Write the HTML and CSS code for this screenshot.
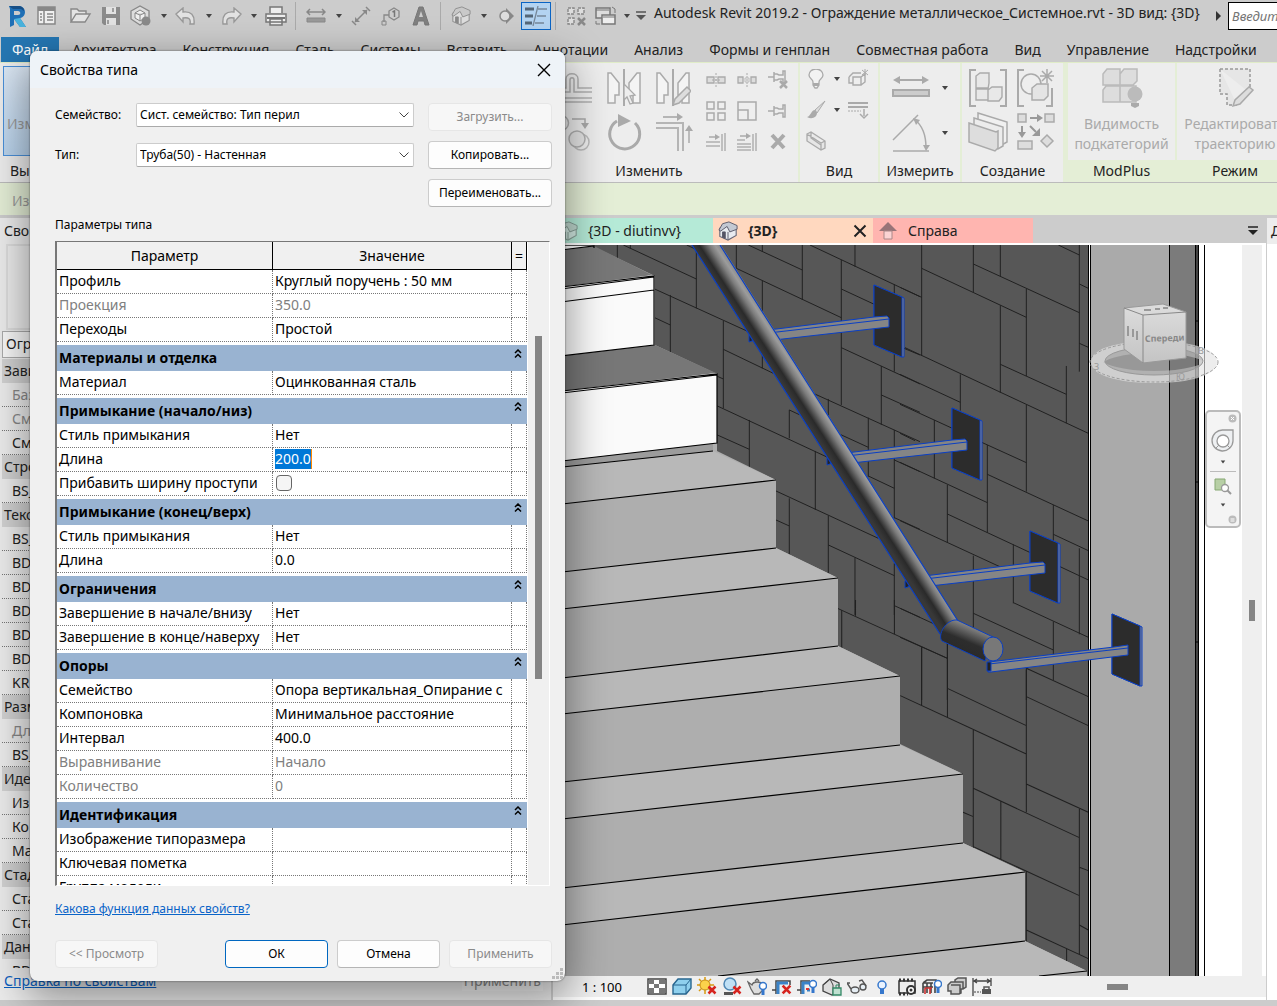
FILE: index.html
```html
<!doctype html>
<html lang="ru">
<head>
<meta charset="utf-8">
<title>Autodesk Revit 2019.2</title>
<link rel="stylesheet" href="styles.css">
</head>

<body>
<svg class="defs" aria-hidden="true">
	<symbol id="down" viewBox="0 0 8 8"><path d="M1 2h6L4 6z" fill="#444"/></symbol>
	<symbol id="up2" viewBox="0 0 8 10"><path d="M1 4l3-3 3 3M1 8.500l3-3 3 3" fill="none" stroke="#000" stroke-width="1.500"/></symbol>
	<symbol id="chev" viewBox="0 0 12 8"><path d="M1.500 1.500L6 6l4.500-4.500" fill="none" stroke="#444"/></symbol>
	<symbol id="house" viewBox="0 0 22 22"><path d="M2 8l9-5 9 4v9l-9 5-9-4z" fill="#e8ebf0" stroke="#667" stroke-width="1.200"/><path d="M5 3l7-2 9 4v4l-8 3-3-6-7 5-2-1z" fill="#c3c9d3" stroke="#556"/><path d="M5 12h3v7l-3-1zM11 12v8" stroke="#556" fill="#556"/></symbol>
	<symbol id="mirror" viewBox="0 0 36 40"><path d="M2 5h3l8 10v12H9v8H2zM34 5h-3l-8 10v12h4v8h7z" fill="#f4f4f4" stroke="#aaa" stroke-width="1.500"/><path d="M18 1v37" stroke="#aaa" stroke-width="2"/></symbol>
	<symbol id="pin" viewBox="0 0 20 20"><path d="M0 10h6M6 5v10M6 7h3l2 1h4V4h2v12h-2v-4h-4l-2 1H6" fill="none" stroke="#aaa" stroke-width="1.500"/></symbol>
	<symbol id="bulb" viewBox="0 0 20 20"><path d="M7 13c0-3-4-3-4-7a7 6 0 0114 0c0 4-4 4-4 7v3l-2 3H9l-2-3z" fill="#f2f2f2" stroke="#aaa" stroke-width="1.300"/><path d="M7 14h6v3H7z" fill="#aaa"/></symbol>
	<symbol id="cross" viewBox="0 0 10 10"><path d="M1.500 1.500l7 7M8.500 1.500l-7 7" stroke="#d6241f" stroke-width="2.500"/></symbol>
</svg>

<div class="app">
	<header class="quick">
		<button class="qi"><svg width="22" height="26" viewBox="0 0 22 26"><path d="M3 3h9c9 0 9 11 2 12l6 9h-6L8 16v6l-4 2V6z" fill="#1f6fb5"/><path d="M3 3h9c4 0 6 2 6 5l-3-2H7L3 3z" fill="#174f86"/><path d="M8 8h4c3 0 3 4 0 4H8z" fill="#ccc"/><path d="M8 16l6 8h6l-6-9z" fill="#49b2dc"/></svg></button>
		<button class="qi gap"><svg width="20" height="20" viewBox="0 0 20 20"><path d="M1 1h17v17H1z" fill="#f0f0f0" stroke="#888" stroke-width="1.500"/><path d="M1 1h17v4H1z" fill="#888"/><path d="M7 5v13M3 8h2M3 11h2M3 14h2M10 8h6M10 11h6M10 14h6" stroke="#888" stroke-width="1.500"/></svg></button>
		<button class="qi"><svg width="22" height="20" viewBox="0 0 22 20"><path d="M1 16V3h6l2 2h7v3M1 16l5-8h14l-5 8z" fill="#e4e4e4" stroke="#888" stroke-width="1.400"/></svg></button>
		<button class="qi"><svg width="20" height="20" viewBox="0 0 20 20"><path d="M1 1h18v18H3l-2-2z" fill="#8b8b8b"/><path d="M5 1h10v7H5zM5 12h10v7H5z" fill="#e2e2e2"/><path d="M7 14v4M12 2v4" stroke="#888" stroke-width="1.500"/></svg></button>
		<button class="qi"><svg width="22" height="22" viewBox="0 0 22 22"><path d="M1 6l9-5 9 5v8l-9 6-9-6z" fill="#ddd" stroke="#888" stroke-width="1.300"/><path d="M5 8l5-3 5 3v5l-5 3-5-3zM10 10v6M5 8l5 2 5-2" fill="#f0f0f0" stroke="#888"/><circle cx="16" cy="16" r="4.500" fill="#8a8a8a"/></svg></button>
		<button class="qa"><svg width="8" height="8"><use href="#down"/></svg></button>
		<button class="qi"><svg width="22" height="18" viewBox="0 0 22 18"><path d="M1 7l7-6v4c8-1 12 3 11 12h-4c1-5-1-7-7-6v4z" fill="#e2e2e2" stroke="#999" stroke-width="1.400"/></svg></button>
		<button class="qa"><svg width="8" height="8"><use href="#down"/></svg></button>
		<button class="qi"><svg width="22" height="18" viewBox="0 0 22 18"><path d="M21 7l-7-6v4C6 4 2 8 3 17h4c-1-5 1-7 7-6v4z" fill="#e2e2e2" stroke="#999" stroke-width="1.400"/></svg></button>
		<button class="qa"><svg width="8" height="8"><use href="#down"/></svg></button>
		<button class="qi"><svg width="22" height="20" viewBox="0 0 22 20"><path d="M5 7V1h12v6M1 8h20v8H1zM5 13h12v6H5z" fill="#eee" stroke="#777" stroke-width="1.500"/><path d="M2 12h18" stroke="#777" stroke-width="2"/></svg></button>
		<i class="qs"></i>
		<button class="qi"><svg width="20" height="16" viewBox="0 0 20 16"><path d="M1 4h18M4 1L1 4l3 3M16 1l3 3-3 3" fill="none" stroke="#888" stroke-width="1.500"/><path d="M1 10h18v4H1z" fill="#999" stroke="#888"/></svg></button>
		<button class="qa"><svg width="8" height="8"><use href="#down"/></svg></button>
		<button class="qi"><svg width="20" height="20" viewBox="0 0 20 20"><path d="M4 16L16 4M1 15l4 4M15 1l4 4" stroke="#888" stroke-width="1.500"/><path d="M4 16v-5l5 5zM16 4v5l-5-5z" fill="#888"/></svg></button>
		<button class="qi"><svg width="20" height="20" viewBox="0 0 20 20"><path d="M8 5l5-3 5 3v6l-5 3-5-3zM8 9H3v7" fill="none" stroke="#888" stroke-width="1.300"/><path d="M11.500 6l2-1v6" fill="none" stroke="#777" stroke-width="1.500"/><path d="M1 15h4v4H1z" fill="none" stroke="#888"/></svg></button>
		<button class="qi"><svg width="18" height="20" viewBox="0 0 18 20"><path d="M7 1h4l6 18h-4l-1-4H6l-1 4H1z" fill="#808080" stroke="#777"/><path d="M9 5l2 6H7z" fill="#ccc"/></svg></button>
		<i class="qs"></i>
		<button class="qi"><svg class="mute" width="20" height="20"><use href="#house"/></svg></button>
		<button class="qa"><svg width="8" height="8"><use href="#down"/></svg></button>
		<button class="qi"><svg width="18" height="18" viewBox="0 0 18 18"><path d="M9 1l8 8-8 8z" fill="#888"/><circle cx="8" cy="9" r="5" fill="#ddd" stroke="#888" stroke-width="1.500"/></svg></button>
		<button class="qi on"><svg width="22" height="20" viewBox="0 0 22 20"><path d="M0 3h9M0 10h8M0 17h7" stroke="#567" stroke-width="3"/><path d="M13 0L8 20M13 3h9M12 10h9M10 17h9" stroke="#789" stroke-width="1.300"/></svg></button>
		<i class="qs"></i>
		<button class="qi"><svg width="20" height="20" viewBox="0 0 20 20"><path d="M2 2h6v6H2zM12 2h6v6h-6zM2 12h6v6H2z" fill="#ddd" stroke="#888" stroke-dasharray="3 1" stroke-width="1.400"/><path d="M12 12l7 7M19 12l-7 7" stroke="#888" stroke-width="2.500"/></svg></button>
		<button class="qi"><svg width="22" height="20" viewBox="0 0 22 20"><path d="M1 2h14v10H1z" fill="#ddd" stroke="#777" stroke-width="1.500"/><path d="M7 9h13v9H7z" fill="#eee" stroke="#777" stroke-width="1.500"/><path d="M17 1l3 2v4M1 15v3h4M1 4h13M8 11h12" fill="none" stroke="#777"/></svg></button>
		<button class="qa narrow"><svg width="8" height="8"><use href="#down"/></svg></button>
		<button class="qa"><svg width="12" height="12" viewBox="0 0 12 12"><path d="M1 2h10" stroke="#555" stroke-width="1.500"/><path d="M1 5h10l-5 5z" fill="#555"/></svg></button>
		<span class="title">Autodesk Revit 2019.2 - Ограждение металлическое_Системное.rvt - 3D вид: {3D}</span>
		<svg class="more" width="6" height="10" viewBox="0 0 6 10"><path d="M0 0l5 5-5 5z" fill="#333"/></svg>
		<input class="search" type="text" aria-label="Поиск" placeholder="Введите">
	</header>

	<nav class="tabs">
		<button class="file">Файл</button>
		<button>Архитектура</button>
		<button>Конструкция</button>
		<button>Сталь</button>
		<button>Системы</button>
		<button>Вставить</button>
		<button>Аннотации</button>
		<button>Анализ</button>
		<button>Формы и генплан</button>
		<button>Совместная работа</button>
		<button>Вид</button>
		<button>Управление</button>
		<button>Надстройки</button>
	</nav>

	<section class="ribbon">
		<div class="panel p-select">
			<button class="modify">Изм</button>
			<span class="cap">Выб</span>
		</div>
		<div class="panel p-edit">
			<div class="tools">
				<div class="big">
					<svg width="36" height="40" viewBox="0 0 36 40"><path d="M0 20h9V11c0-7 12-7 12 0v9h14M0 24h13V12c0-3 4-3 4 0v12h18M0 34h35M0 30h35" fill="none" stroke="#b0b0b0" stroke-width="1.500"/></svg>
					<svg width="36" height="40" viewBox="0 0 36 40"><use href="#mirror"/><path d="M18 16l11 11-5 1 3 7-3 1-3-7-3 3z" fill="#eee" stroke="#aaa" stroke-width="1.300"/></svg>
					<svg width="36" height="40" viewBox="0 0 36 40"><use href="#mirror"/><path d="M18 37l2-6 12-12 4 4-12 12z" fill="#ddd" stroke="#aaa" stroke-width="1.500"/></svg>
					<svg width="36" height="40" viewBox="0 0 36 40"><circle cx="4" cy="10" r="7.500" fill="none" stroke="#b0b0b0" stroke-width="1.500"/><circle cx="24" cy="29" r="8" fill="#eee" stroke="#bbb" stroke-width="1.500"/><circle cx="20" cy="26" r="8" fill="#e6e6e6" stroke="#b0b0b0" stroke-width="1.500"/><path d="M15 6h13v5" fill="none" stroke="#aaa" stroke-width="1.500"/><path d="M24 10h8l-4 6z" fill="#aaa"/></svg>
					<svg width="36" height="40" viewBox="0 0 36 40"><path d="M11 8a15 15 0 1018 2" fill="none" stroke="#aaa" stroke-width="3"/><path d="M12 1l13 7-13 6z" fill="#aaa"/></svg>
					<svg width="40" height="40" viewBox="0 0 40 40"><path d="M1 10h27v28M1 15h22v23M8 4h16" fill="none" stroke="#b5b5b5" stroke-width="2"/><path d="M22 0l6 4-6 4zM30 18l4-6 4 6z" fill="#aaa"/><path d="M34 16v14" stroke="#aaa" stroke-width="1.500"/></svg>
				</div>
				<div class="small">
					<svg width="20" height="20" viewBox="0 0 20 20"><path d="M1 7h7v6H1zM12 7h7v6h-7z" fill="#ddd" stroke="#aaa" stroke-width="1.300"/><path d="M10 3v14M6 10h8" stroke="#aaa" stroke-dasharray="2 1"/></svg>
					<svg width="20" height="20" viewBox="0 0 20 20"><path d="M1 7h5v6H1zM14 7h5v6h-5z" fill="#ddd" stroke="#aaa" stroke-width="1.300"/><path d="M10 3v14" stroke="#aaa" stroke-dasharray="2 1"/><path d="M8 8h4v4H8z" fill="none" stroke="#bbb"/></svg>
					<svg width="20" height="20" viewBox="0 0 20 20"><use href="#pin" y="-3"/><path d="M12 11l7 7M19 11l-7 7" stroke="#aaa" stroke-width="2.500"/></svg>
					<svg width="20" height="20" viewBox="0 0 20 20"><path d="M1 1h7v7H1zM12 1h7v7h-7zM1 12h7v7H1zM12 12h7v7h-7z" fill="#eee" stroke="#aaa" stroke-width="1.500"/></svg>
					<svg width="20" height="20" viewBox="0 0 20 20"><path d="M1 1h18v18H1zM1 9h10v10" fill="#eee" stroke="#aaa" stroke-width="1.500"/></svg>
					<svg width="20" height="20"><use href="#pin"/></svg>
					<svg width="20" height="20" viewBox="0 0 20 20"><path d="M0 10h14M0 14h14M16 2v17M19 1v18" stroke="#b0b0b0" stroke-width="1.500"/><path d="M3 5h8" stroke="#aaa" stroke-width="1.500"/><path d="M9 2l5 3-5 3z" fill="#aaa"/></svg>
					<svg width="20" height="20" viewBox="0 0 20 20"><path d="M0 8h8M0 12h14M0 15h14M0 18h14M16 2v17M19 1v18" stroke="#b0b0b0" stroke-width="1.500"/><path d="M3 4h8" stroke="#aaa" stroke-width="1.500"/><path d="M9 1l5 3-5 3z" fill="#aaa"/></svg>
					<svg width="20" height="20" viewBox="0 0 20 20"><path d="M4 3l12 13M16 3L4 16" stroke="#aaa" stroke-width="4"/></svg>
				</div>
			</div>
			<span class="cap">Изменить</span>
		</div>
		<div class="panel p-view">
			<div class="tools view">
				<svg width="20" height="20"><use href="#bulb"/></svg><svg width="8" height="8"><use href="#down"/></svg>
				<svg width="22" height="20" viewBox="0 0 22 20"><path d="M1 8l4-4h8M1 8v6h4M5 8h8v8H5zM13 8l4-3v8l-4 3" fill="#eee" stroke="#aaa" stroke-width="1.400"/><path d="M17 0v6M14 1l6 5M20 1l-6 5" stroke="#aaa"/></svg>
				<svg width="20" height="20" viewBox="0 0 20 20"><path d="M19 1L9 10l2 3z" fill="#ddd" stroke="#aaa"/><path d="M9 10c-4 0-4 6-8 7 5 3 10 0 10-4z" fill="#aaa"/></svg><svg width="8" height="8"><use href="#down"/></svg>
				<svg width="22" height="20" viewBox="0 0 22 20"><path d="M0 3h20M0 7h20" stroke="#aaa" stroke-width="2"/><path d="M0 11h13" stroke="#aaa" stroke-dasharray="2 1"/><path d="M16 9v7M12 14l4 4 4-4" fill="none" stroke="#aaa" stroke-width="1.500"/></svg>
				<svg width="20" height="20" viewBox="0 0 20 20"><path d="M1 3l4-2 14 9v7l-4 2L1 10zM1 3l14 9 4-2M15 12v7M5 1v6l10 7" fill="#e6e6e6" stroke="#aaa" stroke-width="1.300"/></svg>
			</div>
			<span class="cap">Вид</span>
		</div>
		<div class="panel p-measure">
			<div class="tools measure">
				<svg width="38" height="36" viewBox="0 0 38 36"><path d="M3 10h32" stroke="#aaa" stroke-width="2"/><path d="M1 10l7-4v8zM37 10l-7-4v8z" fill="#aaa"/><path d="M1 20h36v6H1z" fill="#ccc" stroke="#aaa" stroke-width="2"/></svg><svg width="8" height="8"><use href="#down"/></svg>
				<svg width="38" height="38" viewBox="0 0 38 38"><path d="M1 26L26 1M1 37h36M23 6c8 6 11 15 11 28" fill="none" stroke="#aaa" stroke-width="1.500"/><path d="M21 4l7 2-4 5zM31 31h7l-4 6z" fill="#aaa"/></svg><svg width="8" height="8"><use href="#down"/></svg>
			</div>
			<span class="cap">Измерить</span>
		</div>
		<div class="panel p-create">
			<div class="tools create">
				<svg width="40" height="40" viewBox="0 0 40 40"><path d="M8 2H2v36h6M32 2h6v36h-6" fill="none" stroke="#aaa" stroke-width="2"/><path d="M8 8l4-3h9v10l-1 6h-12zM8 20h12v12H8zM20 22l4-3h10v10l-3 4H20z" fill="#e8e8e8" stroke="#aaa" stroke-width="1.400"/></svg>
				<svg width="40" height="40" viewBox="0 0 40 40"><path d="M8 2H2v36h6M36 20v18h-6" fill="none" stroke="#aaa" stroke-width="2"/><circle cx="15" cy="16" r="10" fill="#eee" stroke="#aaa" stroke-width="1.500"/><path d="M16 20l5-4h11v12l-4 4H16z" fill="#e4e4e4" stroke="#aaa" stroke-width="1.500"/><path d="M31 1v14M24 8h14M26 3l10 10M36 3L26 13" stroke="#aaa" stroke-width="1.500"/></svg>
				<svg width="40" height="40" viewBox="0 0 40 40"><path d="M10 1l29 9v20l-7 4V20L10 12z" fill="#f0f0f0" stroke="#aaa" stroke-width="1.500"/><path d="M6 6l29 9v19l-5 3-24-10z" fill="#ececec" stroke="#aaa" stroke-width="1.500"/><path d="M1 11l27 9 2-1v17l-3 3-26-9z" fill="#ddd" stroke="#aaa" stroke-width="1.500"/></svg>
				<svg width="40" height="40" viewBox="0 0 40 40"><path d="M2 2h8v8H2zM29 2h9v8h-9zM2 29h14v8H2zM25 29l6-6 6 6-6 6z" fill="#ddd" stroke="#aaa" stroke-width="1.500"/><path d="M14 6h8M6 14v8M14 14l6 6" stroke="#999" stroke-width="2"/><path d="M21 2l6 4-6 4zM2 20h8l-4 6zM24 16v8h-8z" fill="#999"/></svg>
			</div>
			<span class="cap">Создание</span>
		</div>
		<div class="panel p-mod">
			<div class="tools lone">
				<svg width="42" height="42" viewBox="0 0 42 42"><path d="M2 7l4-5h13v16H2zM19 7l4-5h13v12l-4 4H19zM2 23l3-4h14v16H2zM19 19h16v16H19z" fill="#ddd" stroke="#bbb" stroke-width="1.500"/><circle cx="34" cy="27" r="7.500" fill="#bbb"/><path d="M30 36h8v3l-4 2-4-2z" fill="#aaa"/></svg>
				<span class="lab">Видимость<br>подкатегорий</span>
			</div>
			<span class="cap">ModPlus</span>
		</div>
		<div class="panel p-mode">
			<div class="tools lone">
				<svg width="42" height="42" viewBox="0 0 42 42"><path d="M6 2h30v24M6 2v25h7v11h10" fill="#e6e6e6" stroke="#999" stroke-width="1.500" stroke-dasharray="3 2"/><path d="M19 39l2-6 14-13 4 3-13 14z" fill="#ddd" stroke="#aaa" stroke-width="1.500"/></svg>
				<span class="lab">Редактировать<br>траекторию</span>
			</div>
			<span class="cap">Режим</span>
		</div>
	</section>

	<div class="options">Изм</div>

	<main class="work">
		<aside class="props">
			<h2>Свой</h2>
			<div class="preview"></div>
			<div class="filter">Огр</div>
			<ul class="plist">
				<li class="g">Зави</li>
				<li class="dim">Баз</li>
				<li class="dim">См</li>
				<li>См</li>
				<li class="g">Стро</li>
				<li>BS_</li>
				<li class="g">Текс</li>
				<li>BS_</li>
				<li>BD</li>
				<li>BD</li>
				<li>BD</li>
				<li>BD</li>
				<li>BD</li>
				<li>KR</li>
				<li class="g">Разм</li>
				<li class="dim">Дл</li>
				<li>BS_</li>
				<li class="g">Иде</li>
				<li>Из</li>
				<li>Ко</li>
				<li>Ма</li>
				<li class="g">Стад</li>
				<li>Ста</li>
				<li>Ста</li>
				<li class="g">Дан</li>
				<li>BD</li>
			</ul>
			<div class="pfoot"><a href="#">Справка по свойствам</a><button disabled>Применить</button></div>
		</aside>

		<section class="view3d">
			<div class="vtabs">
				<button class="vt mint"><svg class="mute" width="20" height="20"><use href="#house"/></svg>{3D - diutinvv}</button>
				<button class="vt peach"><svg width="20" height="20"><use href="#house"/></svg><b>{3D}</b><svg class="vx" width="14" height="14" viewBox="0 0 14 14"><path d="M1.500 1.500l11 11M12.500 1.500l-11 11" stroke="#222" stroke-width="2"/></svg></button>
				<button class="vt rose"><svg width="20" height="20" viewBox="0 0 20 20"><path d="M1 10l9-9 9 9z" fill="#987478"/><path d="M6 10h8v8H6z" fill="#fbd3d3" stroke="#a88"/></svg>Справа</button>
				<svg class="vmenu" width="12" height="12" viewBox="0 0 12 12"><path d="M1 2h10" stroke="#222" stroke-width="1.500"/><path d="M1 5h10l-5 5z" fill="#222"/></svg>
			</div>
			<div class="stage">
				<svg class="scene" viewBox="553 245 689 731" preserveAspectRatio="xMinYMin slice">
					<defs>
						<linearGradient id="tube" gradientUnits="userSpaceOnUse" x1="692" y1="245" x2="712" y2="232"><stop offset="0" stop-color="#383838"/><stop offset=".25" stop-color="#2a2a2a"/><stop offset=".6" stop-color="#7c7c7c"/><stop offset=".8" stop-color="#9c9c9c"/><stop offset="1" stop-color="#8a8a8a"/></linearGradient>
						<linearGradient id="tube2" gradientUnits="userSpaceOnUse" x1="960" y1="650" x2="970" y2="626"><stop offset="0" stop-color="#2a2a2a"/><stop offset=".4" stop-color="#2d2d2d"/><stop offset="1" stop-color="#858585"/></linearGradient>
						<linearGradient id="face" x1="0" y1="0" x2="0" y2="1"><stop offset="0" stop-color="#ddd"/><stop offset="1" stop-color="#c4c4c4"/></linearGradient>
						<g id="plate">
							<path d="M874 285l28 12 2 1v59h-2l-28-12z" fill="#858585" stroke="#0a3fc4"/>
							<path d="M874 285l28 12v60l-28-12z" fill="#2c2c2c" stroke="#0a3fc4"/>
						</g>
						<g id="arm">
							<path d="M749 335v7l8-3v-6z" fill="#222" stroke="#0a3fc4"/>
							<path d="M760 331l114-14 13-1 2 2v9l-115 13z" fill="#858585" stroke="#0a3fc4"/>
							<path d="M760 334l129-15" stroke="#0a3fc4"/>
						</g>
					</defs>
					<path d="M553 245h536v731H553z" fill="#575757"/>
					<!-- brick joints -->
					<g fill="none" stroke="#202020" stroke-width="3">
						<path transform="translate(560 215) scale(.3333)" d="M172 90v40M211 90v10M409 108v172M331 240v172M490 318v262M529 90v70M607 90v20M607 198v262M727 90v165M885 90v65M844 135v435M1003 208v262M964 453v177M688 585v85M568 615v145M805 552v90M766 708v177M925 608v177M1003 645v265M688 850v172M805 902v183M885 1028v172M1003 1045v155M190 90l219 102M284 222l281 128M284 308l47 22M490 403l150 72M472 484l18 8M380 90l30 14M565 90l162 75M529 160l315 148M750 90l330 155M844 222l99 46M844 398l236 109M964 540l116 52M1020 395l60 25M760 535l320 145M472 573l348 162M472 660l96 43M688 585l30 14M840 658l85 39M925 783l78 37M1003 735l77 35M1003 908l77 35M648 828l307 142M648 915l40 18M805 990l198 92M1003 1172l77 35"/>
						<path transform="translate(900 240) scale(.3333)" d="M65 15v332M220 15v142M301 15v93M301 196v262M379 147v261M538 15v380M181 403v109M499 378v172M379 495v260M103 540v175M262 615v263M142 735v173M460 795v110M340 913v177M220 947v218M538 925v258M460 1145v175M65 1222v158M142 1210v170M379 1290v90M0 142l65 30M65 85l314 147M220 72l318 146M475 15l63 30M538 132l27 13M538 310l27 12M15 323l550 257M301 373l198 90M0 403l181 84M0 493l157 72M0 580l45 22M245 607l134 61M262 703l303 140M0 667l262 121M142 822l249 116M0 842l310 143M460 883l105 49M480 980l85 40M340 1088l225 104M220 1120l240 110M0 1105l120 55M0 1192l142 63"/>
						<path transform="translate(560 600) scale(.3444 .3333)" d="M818 30v115M858 0v47M971 0v103M1050 142v175M1125 125v227M1200 390v355M1280 603v174M1354 205v432M1508 627v436M1471 1045v40M1354 815v210M806 25l319 150M988 287l366 175M1125 265l229 112M1354 205l180 85M1354 290l180 87M1354 552l180 85M1200 565l308 148M1170 637l30 13M1200 740l308 147M1354 990l180 86M1508 802l26 10M1508 975l26 15"/>
					</g>
					<!-- stair -->
					<path d="M553 246h41v1l61 29v69l62 29v77l59 29v68l62 30v68l62 30v68l63 30v69l62 29v69l62 30v5H553z" fill="#aeaeae"/>
					<path d="M553 252l41-6 58 29-99 13zM553 357l102-12 61 28-163 19z" fill="#777"/>
					<path d="M553 288l101-13v70l-101 12zM553 392l164-19v70l-164 19zM553 246h41l-41 5z" fill="#fafafa"/>
					<path d="M553 462l160-18v7l-160 17z" fill="#9c9c9c"/>
					<path d="M553 468l160-17 63 29-223 25zM553 573l223-25 62 30-285 32zM553 679l285-33 62 30-347 39zM553 783l347-38 63 29-410 46zM553 889l410-46 62 29-472 54zM700 976l325-35 62 30-48 5z" fill="#b8b8b8"/>
					<path d="M553 251l41-5v2M553 288l101-12v69l-102 12M553 290l101-13M553 303l101-13M553 392l164-18v69l-164 19M553 394l164-19M553 468l160-17M553 505l223-25M553 573l223-25M553 610l285-32M553 679l285-33M553 715l347-39M553 783l347-38M553 820l410-46M553 889l410-46M553 926l472-54M718 976l307-35M1039 976l48-5" fill="none" stroke="#000" stroke-width="1.200"/>
					<!-- column at the right -->
					<path d="M1089 245h116v731h-116z" fill="#fff"/>
					<path d="M1091 245h78v731h-78z" fill="#aaa"/>
					<path d="M1169 245h27v731h-27z" fill="#7b7b7b"/>
					<path d="M1196 245h3v731h-3z" fill="#444"/>
					<path d="M1205 245h37v731h-37z" fill="#fff"/>
					<path d="M1088.500 245v731M1090.500 245v731M1169.500 245v731M1195.500 245v731M1198.500 245v731M1204.500 245v731M1196 321h3M1196 482h3M1196 642h3" stroke="#000"/>
					<!-- supports and handrail -->
					<use href="#plate"/><use href="#arm"/>
					<use href="#plate" x="78" y="123"/><use href="#arm" x="78" y="123"/>
					<use href="#plate" x="156" y="246"/><use href="#arm" x="156" y="246"/>
					<use href="#plate" x="238" y="329"/>
					<path d="M989 662l125-15 14-2v10l-137 17h-3z" fill="#858585" stroke="#0a3fc4"/>
					<path d="M989 664l139-16" stroke="#0a3fc4"/>
					<path d="M987 662h4v9h-4z" fill="#222" stroke="#0a3fc4"/>
					<path d="M692 245h29l237 376-16 14-2-1z" fill="url(#tube)"/>
					<path d="M692 245l248 389M720 245l238 376" stroke="#0a3fc4" stroke-width="1.200"/>
					<path d="M957 620l36 17-8 24-43-20c-5-6 4-22 15-21z" fill="url(#tube2)" stroke="#0a3fc4"/>
					<ellipse cx="993" cy="649" rx="10" ry="12" fill="#787878" stroke="#0a3fc4"/>
					<!-- view cube -->
					<ellipse cx="1154" cy="362" rx="57" ry="15" fill="none" stroke="#e4e4e4" stroke-opacity=".65" stroke-width="12"/>
					<ellipse cx="1154" cy="362" rx="64" ry="20" fill="none" stroke="#999" stroke-dasharray="3 2"/>
					<ellipse cx="1154" cy="361" rx="49" ry="14" fill="#777" fill-opacity=".35" stroke="#999"/>
					<path d="M1124 308l39-4 23 8v46l-43 5-19-14z" fill="url(#face)" stroke="#999"/>
					<path d="M1124 308l19 7 43-3M1143 315v48" fill="none" stroke="#888"/>
					<path d="M1144 310h7M1155 309h5M1163 308h5M1128 326v10M1133 329v8M1137 331v9" stroke="#999" stroke-width="2"/>
					<text x="1145" y="342" class="cube" transform="rotate(-2 1144 343)">Спереди</text>
					<text x="1094" y="370" class="compass">З</text><text x="1176" y="380" class="compass">Ю</text><text x="1198" y="354" class="compass">В</text>
				</svg>
				<div class="navbar">
					<button class="mini" aria-label="Закрыть"><svg width="9" height="9" viewBox="0 0 9 9"><circle cx="4.500" cy="4.500" r="4" fill="#bbb"/><path d="M3 3l3 3M6 3L3 6" stroke="#fff"/></svg></button>
					<button aria-label="Штурвал"><svg width="24" height="24" viewBox="0 0 24 24"><path d="M12 1h10v11a10.500 10.500 0 11-10-11z" fill="#eef0f2" stroke="#999" stroke-width="1.300"/><circle cx="12" cy="12" r="6" fill="#fff" stroke="#999" stroke-width="1.300"/><path d="M5 19l3-3M19 19l-3-3" stroke="#999"/></svg></button>
					<svg width="6" height="6"><use href="#down"/></svg>
					<hr>
					<button aria-label="Зум"><svg width="18" height="18" viewBox="0 0 18 18"><path d="M1 1h10v11H1z" fill="#b7cfa5" stroke="#86a872"/><circle cx="11" cy="10" r="3.500" fill="#fff" stroke="#999" stroke-width="1.300"/><path d="M13 12l4 4" stroke="#999" stroke-width="2"/></svg></button>
					<svg width="6" height="6"><use href="#down"/></svg>
					<button class="mini end" aria-label="Настройка"><svg width="9" height="9" viewBox="0 0 9 9"><circle cx="4.500" cy="4.500" r="4" fill="#bbb"/><path d="M2.500 4h4M2.500 6h4" stroke="#fff"/></svg></button>
				</div>
				<div class="vscroll"><i></i></div>
			</div>
			<div class="vbar">
				<span class="scale">1 : 100</span>
				<div class="vicons">
					<svg viewBox="0 0 20 20"><path d="M1 2h18v15H1z" fill="#fff" stroke="#444" stroke-width="1.500"/><path d="M2 3h5v4H2zM12 3h6v4h-6zM7 7h5v4H7zM2 11h5v5H2zM12 11h6v5h-6z" fill="#777"/></svg>
					<svg viewBox="0 0 20 20"><path d="M1 8l5-6h13v9l-5 6H1z" fill="#8fd0ee" stroke="#27658f" stroke-width="1.400"/><path d="M1 8h13l5-6M14 8v9" fill="none" stroke="#27658f"/></svg>
					<svg viewBox="0 0 20 20"><path d="M8 0v17M0 8h17M2 2l12 12M14 2L2 14" stroke="#d99a12" stroke-width="1.500"/><circle cx="8" cy="8" r="5" fill="#fbd24b" stroke="#c98d12"/><use href="#cross" x="10" y="8" width="10" height="10"/></svg>
					<svg viewBox="0 0 20 20"><circle cx="8" cy="7" r="6" fill="#bfe0f5" stroke="#4d87b5" stroke-width="1.500"/><path d="M2 15h9v3H2z" fill="#555"/><use href="#cross" x="10" y="8" width="10" height="10"/></svg>
					<svg viewBox="0 0 20 20"><path d="M1 5l4 3c1-4 9-4 11 0v5l-4 4H7L4 12zM8 4l2-2 2 2" fill="#ddd" stroke="#666" stroke-width="1.300"/><circle cx="16" cy="9" r="3.500" fill="#fff" stroke="#3577cc" stroke-width="1.500"/><path d="M16 13v5" stroke="#3577cc" stroke-width="3"/></svg>
					<svg viewBox="0 0 20 20"><path d="M0 13h4M4 17V4h14v4" fill="none" stroke="#444" stroke-width="1.500"/><path d="M6 17V6h10" fill="none" stroke="#3a83c8" stroke-width="3"/><use href="#cross" x="9" y="7" width="11" height="11"/></svg>
					<svg viewBox="0 0 20 20"><path d="M0 13h4M4 17V4h9" fill="none" stroke="#444" stroke-width="1.500"/><path d="M6 17V6h8M10 13h3" fill="none" stroke="#3a83c8" stroke-width="3"/><path d="M9 12h3" stroke="#d33" stroke-width="2"/><circle cx="16" cy="7" r="3.500" fill="#fff" stroke="#3577cc" stroke-width="1.500"/><path d="M16 11v5" stroke="#3577cc" stroke-width="3"/></svg>
					<svg viewBox="0 0 20 20"><path d="M1 8l7-6 9 4v9l-7 3-9-4z" fill="#ddd" stroke="#444" stroke-width="1.300"/><path d="M1 8l7-6 3 6v10" fill="none" stroke="#444"/><path d="M11 11h8v7h-8z" fill="#bfe0d0" stroke="#386" stroke-width="1.300"/><path d="M14 11V8h4" fill="none" stroke="#386"/></svg>
					<svg viewBox="0 0 20 20"><ellipse cx="8" cy="13" rx="4" ry="3" fill="#e6eef4" stroke="#555" stroke-width="1.400"/><ellipse cx="16" cy="10" rx="3" ry="3" fill="#e6eef4" stroke="#555" stroke-width="1.400"/><path d="M4 12L0 6h3M19 9l-4-6-3 1" fill="none" stroke="#555" stroke-width="1.400"/></svg>
					<svg viewBox="0 0 20 20"><circle cx="10" cy="8" r="4" fill="#eaf3ff" stroke="#3577cc" stroke-width="1.500"/><path d="M10 12v5" stroke="#3577cc" stroke-width="4"/></svg>
					<svg viewBox="0 0 20 20"><path d="M2 4h16v12H2z" fill="#eee" stroke="#333" stroke-width="1.500"/><path d="M2 3h16M2 17h9" stroke="#333" stroke-width="3" stroke-dasharray="2 2"/><circle cx="14" cy="13" r="4" fill="#fff" stroke="#333" stroke-width="2"/><circle cx="14" cy="13" r="1.500" fill="#333"/></svg>
					<svg viewBox="0 0 20 20"><path d="M1 6l4-3h9v5M1 6v10M1 6h10M1 10h10M5 6v10M9 6v10M13 8v8" fill="none" stroke="#444" stroke-width="1.600"/><path d="M3 11h7M3 11v6M8 11v6" stroke="#c33" stroke-width="1.600"/><circle cx="16" cy="7" r="3.500" fill="#fff" stroke="#3577cc" stroke-width="1.500"/><path d="M16 11v5" stroke="#3577cc" stroke-width="3"/></svg>
					<svg viewBox="0 0 20 20"><path d="M1 8l3-3h4V3l3-2h8v9l-3 2h-2v4l-2 1H4v-3H1zM4 8h9v9M8 5h8v7" fill="#ccc" stroke="#555" stroke-width="1.500"/></svg>
					<svg viewBox="0 0 20 20"><path d="M1 1v18M19 1v8M2 4h16M5 2L2 4l3 2M15 2l3 2-3 2" fill="none" stroke="#444" stroke-width="1.300"/><path d="M2 15h7" stroke="#444" stroke-dasharray="2 1"/><path d="M10 12h9v5h-9z" fill="#555"/><path d="M12 12v-2h5v2" fill="none" stroke="#555" stroke-width="1.500"/></svg>
				</div>
				<i class="hthumb"></i>
			</div>
		</section>

		<aside class="browser"><h2>Д</h2></aside>
	</main>
	<footer class="status"></footer>
</div>

<form class="dlg" role="dialog" aria-labelledby="dt">
	<header class="dhead">
		<h1 id="dt">Свойства типа</h1>
		<button type="button" class="dclose" aria-label="Закрыть"><svg width="14" height="14" viewBox="0 0 14 14"><path d="M1 1l12 12M13 1L1 13" stroke="#000" stroke-width="1.400"/></svg></button>
	</header>
	<div class="dbody">
		<div class="dtop">
			<div class="fields">
				<label for="fam">Семейство:</label>
				<span class="sel"><select id="fam"><option>Сист. семейство: Тип перил</option></select><svg width="12" height="8"><use href="#chev"/></svg></span>
				<label for="typ">Тип:</label>
				<span class="sel"><select id="typ"><option>Труба(50) - Настенная</option></select><svg width="12" height="8"><use href="#chev"/></svg></span>
			</div>
			<div class="side">
				<button type="button" class="btn" disabled>Загрузить...</button>
				<button type="button" class="btn">Копировать...</button>
				<button type="button" class="btn">Переименовать...</button>
			</div>
		</div>
		<p class="ptitle">Параметры типа</p>
		<div class="grid">
			<div class="gwrap">
				<table>
					<colgroup><col class="c1"><col class="c2"><col class="c3"></colgroup>
					<thead><tr><th>Параметр</th><th>Значение</th><th>=</th></tr></thead>
					<tbody>
						<tr><td>Профиль</td><td>Круглый поручень : 50 мм</td><td></td></tr>
						<tr class="dim"><td>Проекция</td><td>350.0</td><td></td></tr>
						<tr><td>Переходы</td><td>Простой</td><td></td></tr>
					</tbody>
					<tbody>
						<tr class="grp"><th colspan="3">Материалы и отделка<svg width="8" height="10"><use href="#up2"/></svg></th></tr>
						<tr><td>Материал</td><td>Оцинкованная сталь</td><td></td></tr>
					</tbody>
					<tbody>
						<tr class="grp"><th colspan="3">Примыкание (начало/низ)<svg width="8" height="10"><use href="#up2"/></svg></th></tr>
						<tr><td>Стиль примыкания</td><td>Нет</td><td></td></tr>
						<tr><td><label for="len">Длина</label></td><td><input id="len" class="edit" type="text" value="200.0"></td><td></td></tr>
						<tr><td><label for="add">Прибавить ширину проступи</label></td><td><input id="add" class="check" type="checkbox"></td><td></td></tr>
					</tbody>
					<tbody>
						<tr class="grp"><th colspan="3">Примыкание (конец/верх)<svg width="8" height="10"><use href="#up2"/></svg></th></tr>
						<tr><td>Стиль примыкания</td><td>Нет</td><td></td></tr>
						<tr><td>Длина</td><td>0.0</td><td></td></tr>
					</tbody>
					<tbody>
						<tr class="grp"><th colspan="3">Ограничения<svg width="8" height="10"><use href="#up2"/></svg></th></tr>
						<tr><td>Завершение в начале/внизу</td><td>Нет</td><td></td></tr>
						<tr><td>Завершение в конце/наверху</td><td>Нет</td><td></td></tr>
					</tbody>
					<tbody>
						<tr class="grp"><th colspan="3">Опоры<svg width="8" height="10"><use href="#up2"/></svg></th></tr>
						<tr><td>Семейство</td><td>Опора вертикальная_Опирание с</td><td></td></tr>
						<tr><td>Компоновка</td><td>Минимальное расстояние</td><td></td></tr>
						<tr><td>Интервал</td><td>400.0</td><td></td></tr>
						<tr class="dim"><td>Выравнивание</td><td>Начало</td><td></td></tr>
						<tr class="dim"><td>Количество</td><td>0</td><td></td></tr>
					</tbody>
					<tbody>
						<tr class="grp"><th colspan="3">Идентификация<svg width="8" height="10"><use href="#up2"/></svg></th></tr>
						<tr><td>Изображение типоразмера</td><td></td><td></td></tr>
						<tr><td>Ключевая пометка</td><td></td><td></td></tr>
						<tr><td>Группа модели</td><td></td><td></td></tr>
					</tbody>
				</table>
			</div>
			<div class="gscroll"><i></i></div>
		</div>
		<a class="help" href="#">Какова функция данных свойств?</a>
		<div class="dfoot">
			<button type="button" class="btn" disabled>&lt;&lt; Просмотр</button>
			<button type="submit" class="btn ok">ОК</button>
			<button type="button" class="btn">Отмена</button>
			<button type="button" class="btn" disabled>Применить</button>
		</div>
	</div>
	<svg class="grip" width="12" height="12" viewBox="0 0 12 12"><path d="M8 0h3v3H8zM4 4h3v3H4zM8 4h3v3H8zM0 8h3v3H0zM4 8h3v3H4zM8 8h3v3H8z" fill="#bbb"/></svg>
</form>
</body>

</html>
```
FILE: styles.css
```css
*{
	box-sizing: border-box;
}
body{
	margin: 0;
	overflow: hidden;
	font: 14px/20px "Noto Sans", "Open Sans", sans-serif;
	color: #222;
}
button{
	font: inherit;
	color: inherit;
	border: none;
	background: none;
	padding: 0;
}
h1,h2,p,ul{
	margin: 0;
	padding: 0;
	font-weight: normal;
	list-style: none;
}
svg{
	display: block;
	flex: none;
}
.defs{
	position: absolute;
	width: 0;
	height: 0;
}
.app{
	height: 100vh;
	display: flex;
	flex-direction: column;
	background: #ccc;
}

/* quick access */
.quick{
	display: flex;
	align-items: center;
	height: 32px;
	padding-left: 2px;
	flex: none;
}
.qi{
	display: flex;
	align-items: center;
	justify-content: center;
	flex: none;
	width: 30px;
	height: 28px;
}
.qi.gap{
	margin-right: 4px;
}
.qi.on{
	background: #b3d3f1;
	border: 1px solid #0a64c4;
}
.qa{
	display: flex;
	justify-content: center;
	flex: none;
	width: 15px;
}
.qa.narrow{
	width: 12px;
}
.qs{
	flex: none;
	height: 28px;
	width: 1px;
	margin: 0 5px 0 4px;
	background: #aaa;
}
.mute{
	filter: grayscale(1);
	opacity: .55;
}
.title{
	flex: none;
	padding: 0 8px 6px 6px;
	white-space: nowrap;
}
.more{
	margin: 0 6px 0 auto;
}
.search{
	flex: none;
	width: 49px;
	height: 28px;
	border: 1px solid #000;
	border-right: none;
	background: #fff;
	padding: 0 0 0 3px;
	font: italic 13px/20px "Noto Sans", sans-serif;
}

/* ribbon tabs */
.tabs{
	display: flex;
	flex: none;
	height: 30px;
	padding: 5px 0 0 1px;
	white-space: nowrap;
}
.tabs button{
	padding: 0 13px;
	flex: none;
}
.tabs .file{
	padding: 0 11px;
	background: #2577b3;
	color: #fff;
}

/* ribbon */
.ribbon{
	display: flex;
	flex: none;
	height: 121px;
	background: #ededed;
	border-top: 1px solid #e0ecc8;
	border-bottom: 1px solid #bbb;
}
.panel{
	display: flex;
	flex-direction: column;
	flex: none;
	border-right: 2px solid #e4eed6;
}
.cap{
	text-align: center;
	line-height: 22px;
}
.p-select{
	width: 500px;
	padding: 3px 0 0 3px;
}
.p-select .cap{
	text-align: left;
	padding-left: 7px;
}
.modify{
	width: 50px;
	height: 90px;
	padding: 26px 0 0 3px;
	margin-bottom: 4px;
	text-align: left;
	border: 1px solid #4a90d9;
	background: linear-gradient(#dbe7f4, #b9d3ec);
	color: #999;
}
.tools{
	display: flex;
	height: 97px;
}
.p-edit{
	width: 300px;
}
.p-edit .tools{
	justify-content: flex-end;
	padding: 5px 10px 0 0;
}
.big{
	display: grid;
	grid-template-columns: repeat(3, 36px);
	grid-auto-rows: 40px;
	gap: 5px 13px;
	margin-right: 15px;
}
.small{
	display: grid;
	grid-template-columns: repeat(3, 20px);
	grid-auto-rows: 20px;
	gap: 11px;
	padding-top: 2px;
}
.p-view{
	width: 80px;
}
.tools.view{
	display: grid;
	grid-template-columns: 20px 8px 22px;
	grid-auto-rows: 20px;
	gap: 11px 7px;
	align-items: center;
	padding: 6px 0 0 6px;
}
.p-measure{
	width: 82px;
}
.tools.measure{
	display: grid;
	grid-template-columns: 38px 8px;
	grid-auto-rows: 38px;
	gap: 7px 11px;
	align-items: center;
	padding: 6px 0 0 12px;
}
.p-create{
	width: 103px;
}
.tools.create{
	display: grid;
	grid-template-columns: 40px 40px;
	grid-auto-rows: 40px;
	gap: 4px 8px;
	padding: 5px 0 0 6px;
}
.p-mod{
	width: 112px;
	border-left: 3px solid #e4eed6;
}
.p-mode{
	width: 116px;
	border-right: none;
}
.lone{
	flex-direction: column;
	align-items: center;
	padding-top: 4px;
	gap: 5px;
	color: #aaa;
}
.lab{
	text-align: center;
	white-space: nowrap;
}
.p-mod .cap,
.p-mode .cap{
	background: #e4eed6;
}
.options{
	flex: none;
	height: 35px;
	padding: 8px 12px;
	background: #e4eed6;
	border-bottom: 3px solid #ccc;
	color: #999;
}

/* workspace */
.work{
	flex: 1;
	min-height: 0;
	display: flex;
}
.props{
	width: 553px;
	flex: none;
	display: flex;
	flex-direction: column;
	padding-left: 2px;
	background: #ececec;
	border-right: 2px solid #ccc;
}
.props h2,
.browser h2{
	flex: none;
	padding-left: 2px;
	font-size: 14px;
	line-height: 26px;
}
.preview{
	flex: none;
	height: 86px;
	margin: 0 4px;
	border: 2px solid #ddd;
}
.filter{
	flex: none;
	height: 27px;
	margin: 1px 0;
	padding: 2px 3px;
	border: 1px solid #aaa;
	background: #f8f8f8;
}
.plist{
	flex: 1;
	min-height: 0;
	overflow: hidden;
}
.plist li{
	height: 24px;
	padding-left: 10px;
	line-height: 23px;
	border-bottom: 1px dotted #777;
}
.plist .g{
	padding-left: 2px;
	background: #d2d2d2;
	border: none;
}
.plist .dim{
	color: #888;
}
.pfoot{
	flex: none;
	display: flex;
	align-items: center;
	justify-content: space-between;
	height: 32px;
	padding: 0 8px 6px 2px;
}
.pfoot a{
	color: #0a5fc0;
}
.pfoot button{
	padding: 0 2px;
	background: #f2f2f2;
	color: #888;
}
.view3d{
	flex: 1;
	min-width: 0;
	display: flex;
	flex-direction: column;
}
.vtabs{
	flex: none;
	display: flex;
	align-items: center;
	height: 27px;
	border-bottom: 2px solid #fff;
}
.vt{
	display: flex;
	align-items: center;
	gap: 10px;
	width: 160px;
	height: 25px;
	padding: 0 6px 0 5px;
}
.mint{
	background: #b5ead7;
}
.peach{
	background: #ffd8bf;
}
.rose{
	background: #ffb5b0;
}
.vx,
.vmenu{
	margin-left: auto;
}
.vmenu{
	margin-right: 7px;
}
.stage{
	flex: 1;
	min-height: 0;
	display: flex;
	position: relative;
	background: #fff;
}
.scene{
	flex: 1;
	min-width: 0;
	height: 100%;
}
.cube{
	font: bold 9px "Noto Sans", sans-serif;
	fill: #888;
}
.compass{
	font: 9px "Noto Sans", sans-serif;
	fill: #999;
}
/* floats over the model */
.navbar{
	position: absolute;
	top: 165px;
	right: 25px;
	width: 36px;
	height: 118px;
	display: flex;
	flex-direction: column;
	align-items: center;
	gap: 6px;
	padding: 2px;
	border: 2px solid #bbb;
	border-radius: 5px;
	background: #f4f4f4;
}
.navbar hr{
	width: 26px;
	margin: 0;
	border: none;
	border-top: 1px solid #bbb;
}
.navbar .mini{
	align-self: flex-end;
}
.navbar .end{
	margin-top: auto;
}
.vscroll{
	flex: none;
	width: 20px;
	margin-right: 4px;
	padding: 355px 7px 0;
	background: #efefef;
}
.vscroll i{
	display: block;
	height: 21px;
	background: #858585;
}
.vbar{
	flex: none;
	display: flex;
	align-items: center;
	height: 24px;
	padding-left: 29px;
	background: #efefef;
	border-bottom: 3px solid #fff;
	font: 13px/20px "Noto Sans", sans-serif;
	color: #000;
}
.scale{
	width: 65px;
	white-space: nowrap;
}
.vicons{
	display: flex;
	gap: 5px;
}
.vicons svg{
	width: 20px;
	height: 20px;
}
.hthumb{
	width: 21px;
	height: 6px;
	margin-left: 115px;
	background: #858585;
}
.browser{
	flex: none;
	width: 11px;
	overflow: hidden;
	background: #fff;
	border-left: 1px solid #ccc;
}
.browser h2{
	padding-left: 4px;
	background: #ededed;
}
.status{
	flex: none;
	height: 6px;
	background: #ccc;
}

/* type properties dialog */
.dlg{
	position: absolute;
	left: 30px;
	top: 51px;
	width: 535px;
	height: 930px;
	display: flex;
	flex-direction: column;
	border-radius: 8px;
	overflow: hidden;
	background: #f0f0f0;
	box-shadow: 0 0 2px rgba(0,0,0,.6), 0 14px 40px 4px rgba(0,0,0,.4);
	font-size: 12px;
	line-height: 16px;
	color: #000;
}
.dhead{
	flex: none;
	display: flex;
	align-items: center;
	justify-content: space-between;
	height: 37px;
	padding: 0 14px 0 10px;
	background: #eef3f8;
}
.dhead h1{
	font-size: 14px;
	line-height: 20px;
}
.dbody{
	flex: 1;
	min-height: 0;
	display: flex;
	flex-direction: column;
	align-items: stretch;
	padding: 15px 13px 13px 25px;
}
.dtop{
	display: flex;
	justify-content: space-between;
}
.fields{
	display: grid;
	grid-template-columns: 81px 278px;
	grid-auto-rows: 24px;
	row-gap: 16px;
	align-items: center;
}
.sel{
	position: relative;
}
.sel select{
	appearance: none;
	width: 100%;
	height: 24px;
	padding: 0 3px;
	border: 1px solid #ccc;
	border-bottom-color: #aaa;
	border-radius: 2px;
	background: #fff;
	font: inherit;
	color: #000;
}
.sel svg{
	position: absolute;
	right: 4px;
	top: 8px;
}
.side{
	display: flex;
	flex-direction: column;
	gap: 10px;
	width: 124px;
}
.btn{
	height: 28px;
	border: 1px solid #ccc;
	border-bottom-color: #b5b5b5;
	border-radius: 4px;
	background: #fdfdfd;
	color: #000;
}
.btn:disabled{
	border-color: #e6e6e6;
	background: #f7f7f7;
	color: #8a8a8a;
}
.ptitle{
	margin: 10px 0 8px;
}
.grid{
	flex: 1;
	min-height: 0;
	display: flex;
	margin-right: 2px;
	border: 1px solid #fff;
	border-top: 1px solid #777;
	border-left: 2px solid #777;
}
.gwrap{
	flex: 1;
	overflow: hidden;
	background: #fff;
}
.gscroll{
	width: 21px;
	padding: 94px 7px 0;
}
.gscroll i{
	display: block;
	height: 343px;
	background: #858585;
}
table{
	table-layout: fixed;
	width: 470px;
	border-collapse: separate;
	border-spacing: 0;
	font-size: 14px;
	line-height: 20px;
}
.c1{
	width: 216px;
}
.c2{
	width: 239px;
}
.c3{
	width: 15px;
}
thead th{
	height: 28px;
	padding: 0;
	border-right: 1px solid #000;
	border-bottom: 1px solid #000;
	background: #f0f0f0;
	font-weight: normal;
}
td{
	height: 24px;
	padding: 0 0 1px 2px;
	border-right: 1px dotted #777;
	border-bottom: 1px dotted #777;
	white-space: nowrap;
	overflow: hidden;
}
.dim td{
	color: #808080;
}
.grp th{
	position: relative;
	height: 29px;
	padding: 0 2px;
	border-top: 3px solid #fff;
	background: #99b3d1;
	text-align: left;
	font-weight: bold;
}
.grp svg{
	position: absolute;
	right: 5px;
	top: 4px;
}
.edit{
	display: block;
	width: 37px;
	height: 20px;
	padding: 0;
	border: none;
	border-right: 1px solid #f80;
	background: #0078d7;
	font: inherit;
	color: #fff;
}
.check{
	appearance: none;
	display: block;
	width: 16px;
	height: 16px;
	margin: 0 1px;
	border: 1px solid #666;
	border-radius: 4px;
	background: #f5f5f5;
}
.help{
	align-self: flex-start;
	margin: 15px 0 23px;
	color: #0a64c8;
}
.dfoot{
	display: flex;
	gap: 9px;
}
.dfoot .btn{
	width: 103px;
}
.dfoot .ok{
	margin-left: auto;
	border-color: #0067c0;
}
.grip{
	position: absolute;
	right: 1px;
	bottom: 1px;
}
```
